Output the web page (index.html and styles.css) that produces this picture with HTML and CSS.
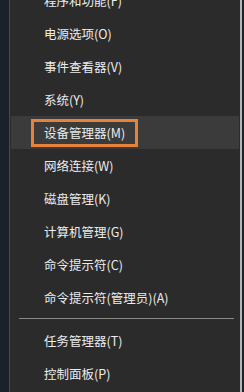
FILE: index.html
```html
<!DOCTYPE html>
<html lang="zh-CN">
<head>
    <meta charset="UTF-8">
    <meta name="viewport" content="width=device-width, initial-scale=1.0">
    <title>快速链接菜单</title>
    <link rel="stylesheet" href="styles.css">
</head>
<body>
    <div class="desktop">
        <ul class="menu">
            <li class="item">程序和功能(F)</li>
            <li class="item">电源选项(O)</li>
            <li class="item">事件查看器(V)</li>
            <li class="item">系统(Y)</li>
            <li class="item active"><span class="mark">设备管理器(M)</span></li>
            <li class="item">网络连接(W)</li>
            <li class="item">磁盘管理(K)</li>
            <li class="item">计算机管理(G)</li>
            <li class="item">命令提示符(C)</li>
            <li class="item">命令提示符(管理员)(A)</li>
            <li class="sep"></li>
            <li class="item">任务管理器(T)</li>
            <li class="item">控制面板(P)</li>
        </ul>
    </div>
</body>
</html>
```

FILE: styles.css
```css
/* 开始按钮右键菜单 */
body {
    margin: 0;
    padding: 0;
    background-color: #1b212b;
    font-family: "Noto Sans CJK SC", "Liberation Sans", sans-serif;
}
.desktop {
    display: flex;
    flex-direction: column;
    height: 392px;
    padding-left: 9px;
    padding-right: 2px;
    overflow: hidden;
}
.menu {
    list-style: none;
    flex: none;
    margin: -16px 0 0 0;
    padding: 0 1px;
    height: 408px;
    box-sizing: border-box;
    background-color: #2b2b2b;
    border-left: 1px solid #4a4a4a;
    border-right: 2px solid #b4b4b4;
}
.item {
    height: 33px;
    display: flex;
    align-items: center;
    padding-left: 33px;
    color: #ececec;
    font-size: 12.5px;
}
.item.active {
    background-color: #3b3b3b;
    padding-left: 20px;
}
.mark {
    display: flex;
    align-items: center;
    height: 22px;
    padding: 0 10px;
    border: 3px solid #e5833a;
}
.sep {
    height: 10px;
    padding-top: 4px;
    box-sizing: border-box;
    margin: 0 5px 0 8px;
}
.sep::before {
    content: "";
    display: block;
    height: 1px;
    background-color: #8a8a8a;
}
```
